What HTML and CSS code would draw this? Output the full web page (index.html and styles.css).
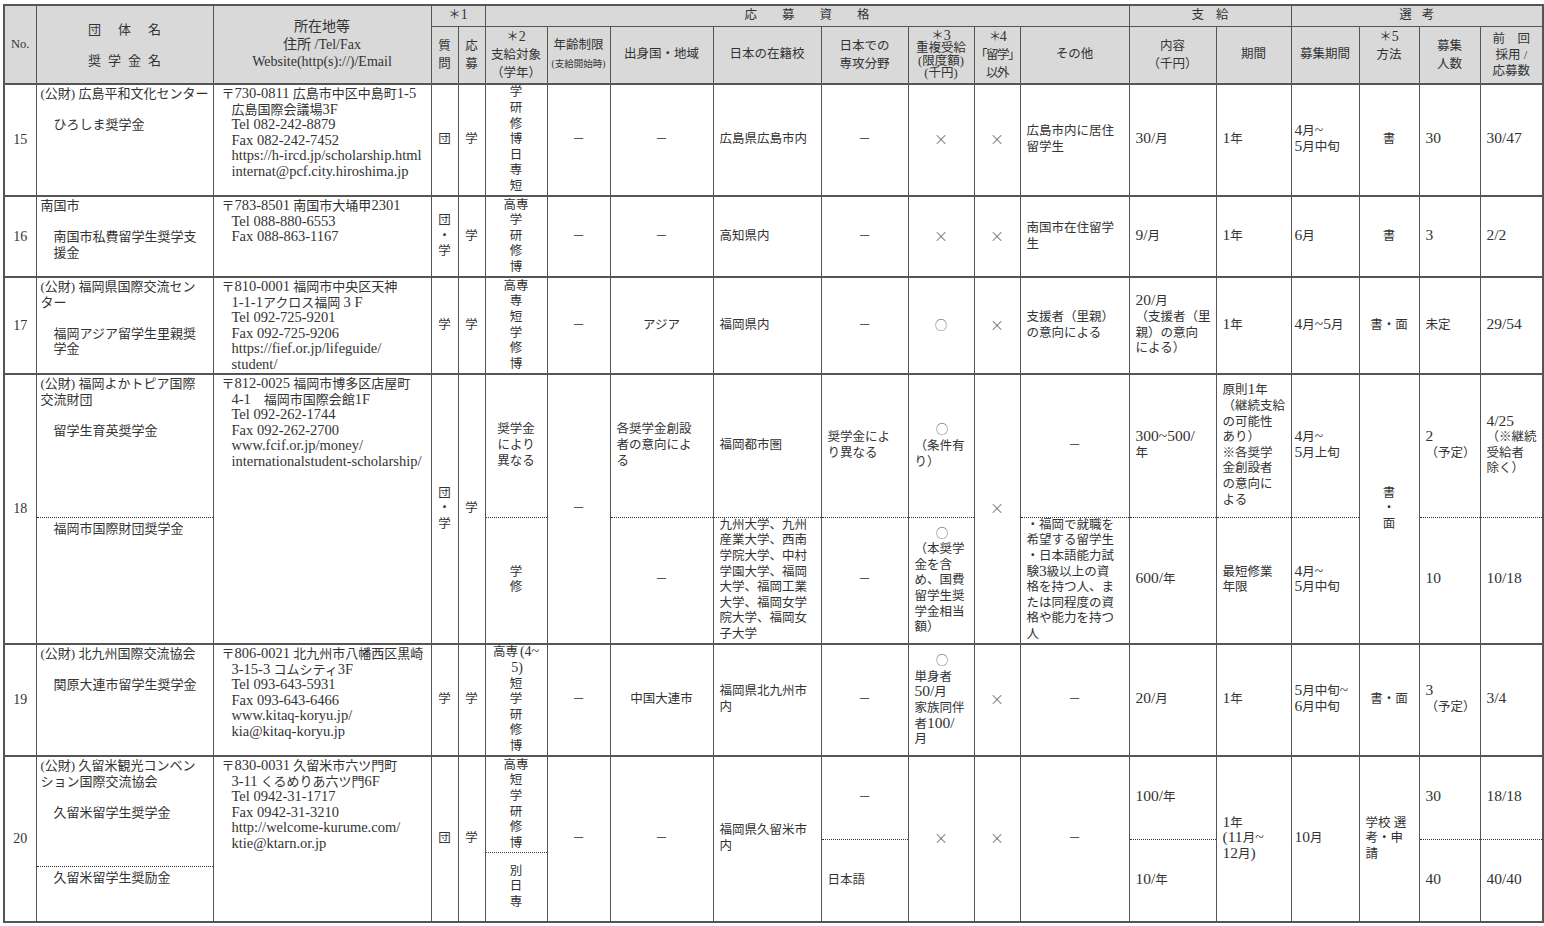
FILE: index.html
```html
<!DOCTYPE html>
<html lang="ja">
<head>
<meta charset="utf-8">
<title>奨学金一覧</title>
<link rel="stylesheet" href="styles.css">
</head>
<body>
<table class="t">
<colgroup>
<col class="w-no"><col class="w-org"><col class="w-addr"><col class="w-q"><col class="w-a"><col class="w-tg"><col class="w-age"><col class="w-orig"><col class="w-sch"><col class="w-maj"><col class="w-dup"><col class="w-oth"><col class="w-etc"><col class="w-amt"><col class="w-per"><col class="w-rec"><col class="w-met"><col class="w-num"><col class="w-prev">
</colgroup>
<thead>
<tr class="h1">
<th rowspan="2" class="hno">No.</th>
<th rowspan="2" class="horg"><div class="ls1">団体名</div><div class="ls2">奨学金名</div></th>
<th rowspan="2" class="haddr">所在地等<br>住所 /Tel/Fax<br>Website(http(s)://)/Email</th>
<th colspan="2">＊<span class="hn">1</span></th>
<th colspan="8"><span class="ls-big">応募資格</span></th>
<th colspan="2"><span class="ls-mid">支給</span></th>
<th colspan="4"><span class="ls-sm">選考</span></th>
</tr>
<tr class="h2">
<th class="lh18">質<br>問</th>
<th class="lh18">応<br>募</th>
<th class="lh18">＊<span class="hn">2</span><br>支給対象<br>（学年）</th>
<th class="lh18">年齢制限<br><span class="tiny">(支給開始時)</span></th>
<th>出身国・地域</th>
<th>日本の在籍校</th>
<th class="lh18">日本での<br>専攻分野</th>
<th class="lh12">＊<span class="hn">3</span><br>重複受給<br>(限度額)<br>(千円)</th>
<th class="lh18 cond">＊<span class="hn">4</span><br>「留学」<br>以外</th>
<th>その他</th>
<th class="lh18">内容<br>（千円）</th>
<th>期間</th>
<th>募集期間</th>
<th class="lh18 up">＊<span class="hn">5</span><br>方法</th>
<th class="lh18">募集<br>人数</th>
<th class="lh16">前　回<br>採用 /<br>応募数</th>
</tr>
</thead>
<tbody>
<tr class="r r15">
<td class="no">15</td>
<td class="org"><div>(公財) 広島平和文化センター</div><div class="sch">ひろしま奨学金</div></td>
<td class="addr"><div>〒<span class="la">730-0811</span> 広島市中区中島町<span class="la">1-5</span></div><div class="ind">広島国際会議場<span class="la">3F</span><br><span class="la">Tel 082-242-8879</span><br><span class="la">Fax 082-242-7452</span><br><span class="la">https://h-ircd.jp/scholarship.html</span><br><span class="la">internat@pcf.city.hiroshima.jp</span></div></td>
<td class="c">団</td>
<td class="c">学</td>
<td class="c">学<br>研<br>修<br>博<br>日<br>専<br>短</td>
<td class="c dash">－</td>
<td class="c dash">－</td>
<td class="l">広島県広島市内</td>
<td class="c dash">－</td>
<td class="c"><span class="x">×</span></td>
<td class="c"><span class="x">×</span></td>
<td class="l">広島市内に居住<br>留学生</td>
<td class="l"><span class="n">30/</span>月</td>
<td class="l"><span class="n">1</span>年</td>
<td class="l nar"><span class="n">4</span>月<span class="n">~</span><br><span class="n">5</span>月中旬</td>
<td class="c">書</td>
<td class="l"><span class="n">30</span></td>
<td class="l"><span class="n">30/47</span></td>
</tr>
<tr class="r r16">
<td class="no">16</td>
<td class="org"><div>南国市</div><div class="sch">南国市私費留学生奨学支<br>援金</div></td>
<td class="addr"><div>〒<span class="la">783-8501</span> 南国市大埇甲<span class="la">2301</span></div><div class="ind"><span class="la">Tel 088-880-6553</span><br><span class="la">Fax 088-863-1167</span></div></td>
<td class="c">団<br>・<br>学</td>
<td class="c">学</td>
<td class="c">高専<br>学<br>研<br>修<br>博</td>
<td class="c dash">－</td>
<td class="c dash">－</td>
<td class="l">高知県内</td>
<td class="c dash">－</td>
<td class="c"><span class="x">×</span></td>
<td class="c"><span class="x">×</span></td>
<td class="l">南国市在住留学<br>生</td>
<td class="l"><span class="n">9/</span>月</td>
<td class="l"><span class="n">1</span>年</td>
<td class="l nar"><span class="n">6</span>月</td>
<td class="c">書</td>
<td class="l"><span class="n">3</span></td>
<td class="l"><span class="n">2/2</span></td>
</tr>
<tr class="r r17">
<td class="no">17</td>
<td class="org"><div>(公財) 福岡県国際交流セン<br>ター</div><div class="sch">福岡アジア留学生里親奨<br>学金</div></td>
<td class="addr"><div>〒<span class="la">810-0001</span> 福岡市中央区天神</div><div class="ind"><span class="la">1-1-1</span>アクロス福岡 <span class="la">3 F</span><br><span class="la">Tel 092-725-9201</span><br><span class="la">Fax 092-725-9206</span><br><span class="la">https://fief.or.jp/lifeguide/</span><br><span class="la">student/</span></div></td>
<td class="c">学</td>
<td class="c">学</td>
<td class="c">高専<br>専<br>短<br>学<br>修<br>博</td>
<td class="c dash">－</td>
<td class="c">アジア</td>
<td class="l">福岡県内</td>
<td class="c dash">－</td>
<td class="c"><span class="o">○</span></td>
<td class="c"><span class="x">×</span></td>
<td class="l">支援者（里親）<br>の意向による</td>
<td class="l"><span class="n">20/</span>月<br>（支援者（里<br>親）の意向<br>による）</td>
<td class="l"><span class="n">1</span>年</td>
<td class="l nar"><span class="n">4</span>月<span class="n">~5</span>月</td>
<td class="c">書・面</td>
<td class="l">未定</td>
<td class="l"><span class="n">29/54</span></td>
</tr>
<tr class="r r18a">
<td class="no" rowspan="2">18</td>
<td class="org"><div>(公財) 福岡よかトピア国際<br>交流財団</div><div class="sch">留学生育英奨学金</div></td>
<td class="addr" rowspan="2"><div>〒<span class="la">812-0025</span> 福岡市博多区店屋町</div><div class="ind"><span class="la">4-1</span>　福岡市国際会館<span class="la">1F</span><br><span class="la">Tel 092-262-1744</span><br><span class="la">Fax 092-262-2700</span><br><span class="la">www.fcif.or.jp/money/</span><br><span class="la">internationalstudent-scholarship/</span></div></td>
<td class="c" rowspan="2">団<br>・<br>学</td>
<td class="c" rowspan="2">学</td>
<td class="c">奨学金<br>により<br>異なる</td>
<td class="c dash" rowspan="2">－</td>
<td class="l">各奨学金創設<br>者の意向によ<br>る</td>
<td class="l">福岡都市圏</td>
<td class="l">奨学金によ<br>り異なる</td>
<td class="l"><div class="ctr"><span class="o">○</span></div>（条件有<br>り）</td>
<td class="c" rowspan="2"><span class="x">×</span></td>
<td class="c dash">－</td>
<td class="l"><span class="n">300~500/</span><br>年</td>
<td class="l">原則<span class="n">1</span>年<br>（継続支給<br>の可能性<br>あり）<br>※各奨学<br>金創設者<br>の意向に<br>よる</td>
<td class="l nar"><span class="n">4</span>月<span class="n">~</span><br><span class="n">5</span>月上旬</td>
<td class="c" rowspan="2">書<br>・<br>面</td>
<td class="l"><span class="n">2</span><br>（予定）</td>
<td class="l"><span class="n">4/25</span><br>（※継続<br>受給者<br>除く）</td>
</tr>
<tr class="sub r18b">
<td class="org"><div class="sch0">福岡市国際財団奨学金</div></td>
<td class="c">学<br>修</td>
<td class="c dash">－</td>
<td class="l">九州大学、九州<br>産業大学、西南<br>学院大学、中村<br>学園大学、福岡<br>大学、福岡工業<br>大学、福岡女学<br>院大学、福岡女<br>子大学</td>
<td class="c dash">－</td>
<td class="l"><div class="ctr"><span class="o">○</span></div>（本奨学<br>金を含<br>め、国費<br>留学生奨<br>学金相当<br>額）</td>
<td class="l">・福岡で就職を<br>希望する留学生<br>・日本語能力試<br>験<span class="n">3</span>級以上の資<br>格を持つ人、ま<br>たは同程度の資<br>格や能力を持つ<br>人</td>
<td class="l"><span class="n">600/</span>年</td>
<td class="l">最短修業<br>年限</td>
<td class="l nar"><span class="n">4</span>月<span class="n">~</span><br><span class="n">5</span>月中旬</td>
<td class="l"><span class="n">10</span></td>
<td class="l"><span class="n">10/18</span></td>
</tr>
<tr class="r r19">
<td class="no">19</td>
<td class="org"><div>(公財) 北九州国際交流協会</div><div class="sch">関原大連市留学生奨学金</div></td>
<td class="addr"><div>〒<span class="la">806-0021</span> 北九州市八幡西区黒崎</div><div class="ind"><span class="la">3-15-3</span> コムシティ<span class="la">3F</span><br><span class="la">Tel 093-643-5931</span><br><span class="la">Fax 093-643-6466</span><br><span class="la">www.kitaq-koryu.jp/</span><br><span class="la">kia@kitaq-koryu.jp</span></div></td>
<td class="c">学</td>
<td class="c">学</td>
<td class="c">高専<span class="n4">(4~</span><br><span class="n4">5)</span><br>短<br>学<br>研<br>修<br>博</td>
<td class="c dash">－</td>
<td class="c">中国大連市</td>
<td class="l">福岡県北九州市<br>内</td>
<td class="c dash">－</td>
<td class="l"><div class="ctr"><span class="o">○</span></div>単身者<br><span class="n">50/</span>月<br>家族同伴<br>者<span class="n">100/</span><br>月</td>
<td class="c"><span class="x">×</span></td>
<td class="c dash">－</td>
<td class="l"><span class="n">20/</span>月</td>
<td class="l"><span class="n">1</span>年</td>
<td class="l nar"><span class="n">5</span>月中旬<span class="n">~</span><br><span class="n">6</span>月中旬</td>
<td class="c">書・面</td>
<td class="l"><span class="n">3</span><br>（予定）</td>
<td class="l"><span class="n">3/4</span></td>
</tr>
<tr class="r r20">
<td class="no">20</td>
<td class="sp"><div class="split s-org"><div class="p po"><div>(公財) 久留米観光コンベン<br>ション国際交流協会<div class="sch">久留米留学生奨学金</div></div></div><div class="p po"><div class="sch0">久留米留学生奨励金</div></div></div></td>
<td class="addr"><div>〒<span class="la">830-0031</span> 久留米市六ツ門町</div><div class="ind"><span class="la">3-11</span> くるめりあ六ツ門<span class="la">6F</span><br><span class="la">Tel 0942-31-1717</span><br><span class="la">Fax 0942-31-3210</span><br><span class="la">http://welcome-kurume.com/</span><br><span class="la">ktie@ktarn.or.jp</span></div></td>
<td class="c">団</td>
<td class="c">学</td>
<td class="sp"><div class="split s-tg"><div class="p pc"><div>高専<br>短<br>学<br>研<br>修<br>博</div></div><div class="p pc"><div>別<br>日<br>専</div></div></div></td>
<td class="c dash">－</td>
<td class="c dash">－</td>
<td class="l">福岡県久留米市<br>内</td>
<td class="sp"><div class="split s-mid"><div class="p pc dash"><div>－</div></div><div class="p"><div>日本語</div></div></div></td>
<td class="c"><span class="x">×</span></td>
<td class="c"><span class="x">×</span></td>
<td class="c dash">－</td>
<td class="sp"><div class="split s-mid"><div class="p"><div><span class="n">100/</span>年</div></div><div class="p"><div><span class="n">10/</span>年</div></div></div></td>
<td class="l"><span class="n">1</span>年<br><span class="n">(11</span>月<span class="n">~</span><br><span class="n">12</span>月<span class="n">)</span></td>
<td class="l nar"><span class="n">10</span>月</td>
<td class="l">学校 選<br>考・申<br>請</td>
<td class="sp"><div class="split s-mid"><div class="p"><div><span class="n">30</span></div></div><div class="p"><div><span class="n">40</span></div></div></div></td>
<td class="sp"><div class="split s-mid"><div class="p"><div><span class="n">18/18</span></div></div><div class="p"><div><span class="n">40/40</span></div></div></div></td>
</tr>
</tbody>
</table>
</body>
</html>
```

FILE: styles.css
```css
html, body {
  margin: 0;
  background: #ffffff;
}
body {
  padding: 4px 0 0 3px;
  font-family: "Liberation Serif", "Noto Sans CJK JP", serif;
  color: #333333;
}
.t {
  border-collapse: collapse;
  table-layout: fixed;
  width: 1539px;
  border: 2px solid #555555;
  font-size: 12.5px;
  line-height: 15.6px;
}
.w-no { width: 32px; }
.w-org { width: 177px; }
.w-addr { width: 218px; }
.w-q { width: 27px; }
.w-a { width: 27px; }
.w-tg { width: 62px; }
.w-age { width: 63px; }
.w-orig { width: 103px; }
.w-sch { width: 108px; }
.w-maj { width: 87px; }
.w-dup { width: 66px; }
.w-oth { width: 46px; }
.w-etc { width: 109px; }
.w-amt { width: 87px; }
.w-per { width: 75px; }
.w-rec { width: 68px; }
.w-met { width: 60px; }
.w-num { width: 61px; }
.w-prev { width: 63px; }

.t th, .t td {
  border-left: 1px solid #555555;
  border-right: 1px solid #555555;
  padding: 0 6px;
  white-space: nowrap;
  vertical-align: middle;
  font-weight: normal;
  overflow: hidden;
}
.t th {
  background: #d9d9d9;
  text-align: center;
  padding: 0;
  font-size: 12.5px;
}
.hn { font-size: 14px; line-height: 0; }
.h1 { height: 21px; }
.h1 th { border-bottom: 1px solid #555555; line-height: 15px; }
.h2 { height: 58px; }
.h2 th { border-bottom: 2px solid #555555; }
.hno { font-size: 13.5px; }
.ls1 { letter-spacing: 17px; padding-left: 17px; line-height: 15px; font-size: 13px; }
.ls2 { letter-spacing: 7px; padding-left: 7px; line-height: 15px; margin-top: 16px; font-size: 13px; }
.t th.haddr { line-height: 17.5px; font-size: 14px; }
.ls-big { letter-spacing: 25px; padding-left: 25px; }
.ls-mid { letter-spacing: 12px; padding-left: 12px; }
.ls-sm { letter-spacing: 10px; padding-left: 10px; }
.lh18 { line-height: 18px; }
.lh16 { line-height: 16px; }
.lh12 { line-height: 12.3px; }
.cond { letter-spacing: -1.5px; }
.up { padding-bottom: 18px !important; }
.tiny { font-size: 9.5px; letter-spacing: 0; }

tr.r > td { border-top: 2px solid #555555; }
tr.sub > td { border-top: 1px dotted #333333; }
.r15 { height: 112px; }
.r16 { height: 81px; }
.r17 { height: 97px; }
.r18a { height: 143px; }
.r18b { height: 127px; }
.r19 { height: 112px; }
.r20 { height: 166px; }

.t td.no { text-align: center; padding: 0; font-size: 14px; }
.t td.org {
  vertical-align: top;
  padding: 1px 2px 0 4px;
  font-size: 13px;
}
.sch { padding-left: 13px; margin-top: 15.6px; }
.sch0 { padding-left: 13px; padding-top: 2px; }
.t td.addr {
  vertical-align: top;
  padding: 1px 0 0 8px;
  font-size: 13px;
}
.la { font-size: 14.5px; line-height: 0; }
.n { font-size: 15.5px; line-height: 0; }
.n4 { font-size: 14px; line-height: 0; padding-left: 2px; }
.ind { padding-left: 10px; }
.t td.c { text-align: center; padding: 0; }
.t td.l { text-align: left; padding: 0 4px 0 6px; }
.t td.nar { padding-left: 3px; }
.ctr { text-align: center; }
.dash { color: #555555; }
.x {
  font-family: "Noto Sans CJK JP", sans-serif;
  font-weight: 300;
  font-size: 14px;
  color: #555555;
}
.o {
  font-family: "Noto Sans CJK JP", sans-serif;
  font-weight: 300;
  color: #555555;
}

.t td.sp { padding: 0; vertical-align: top; }
.split { display: grid; height: 164px; }
.s-org { grid-template-rows: 109px 1fr; }
.s-tg { grid-template-rows: 95px 1fr; }
.s-mid { grid-template-rows: 82px 1fr; }
.split > .p + .p { border-top: 1px dotted #333333; }
.p {
  display: grid;
  align-content: center;
  padding: 0 4px 0 6px;
}
.pc { justify-items: center; text-align: center; padding: 0; }
.po {
  align-content: start;
  padding: 1px 2px 0 4px;
  font-size: 13px;
}
```
